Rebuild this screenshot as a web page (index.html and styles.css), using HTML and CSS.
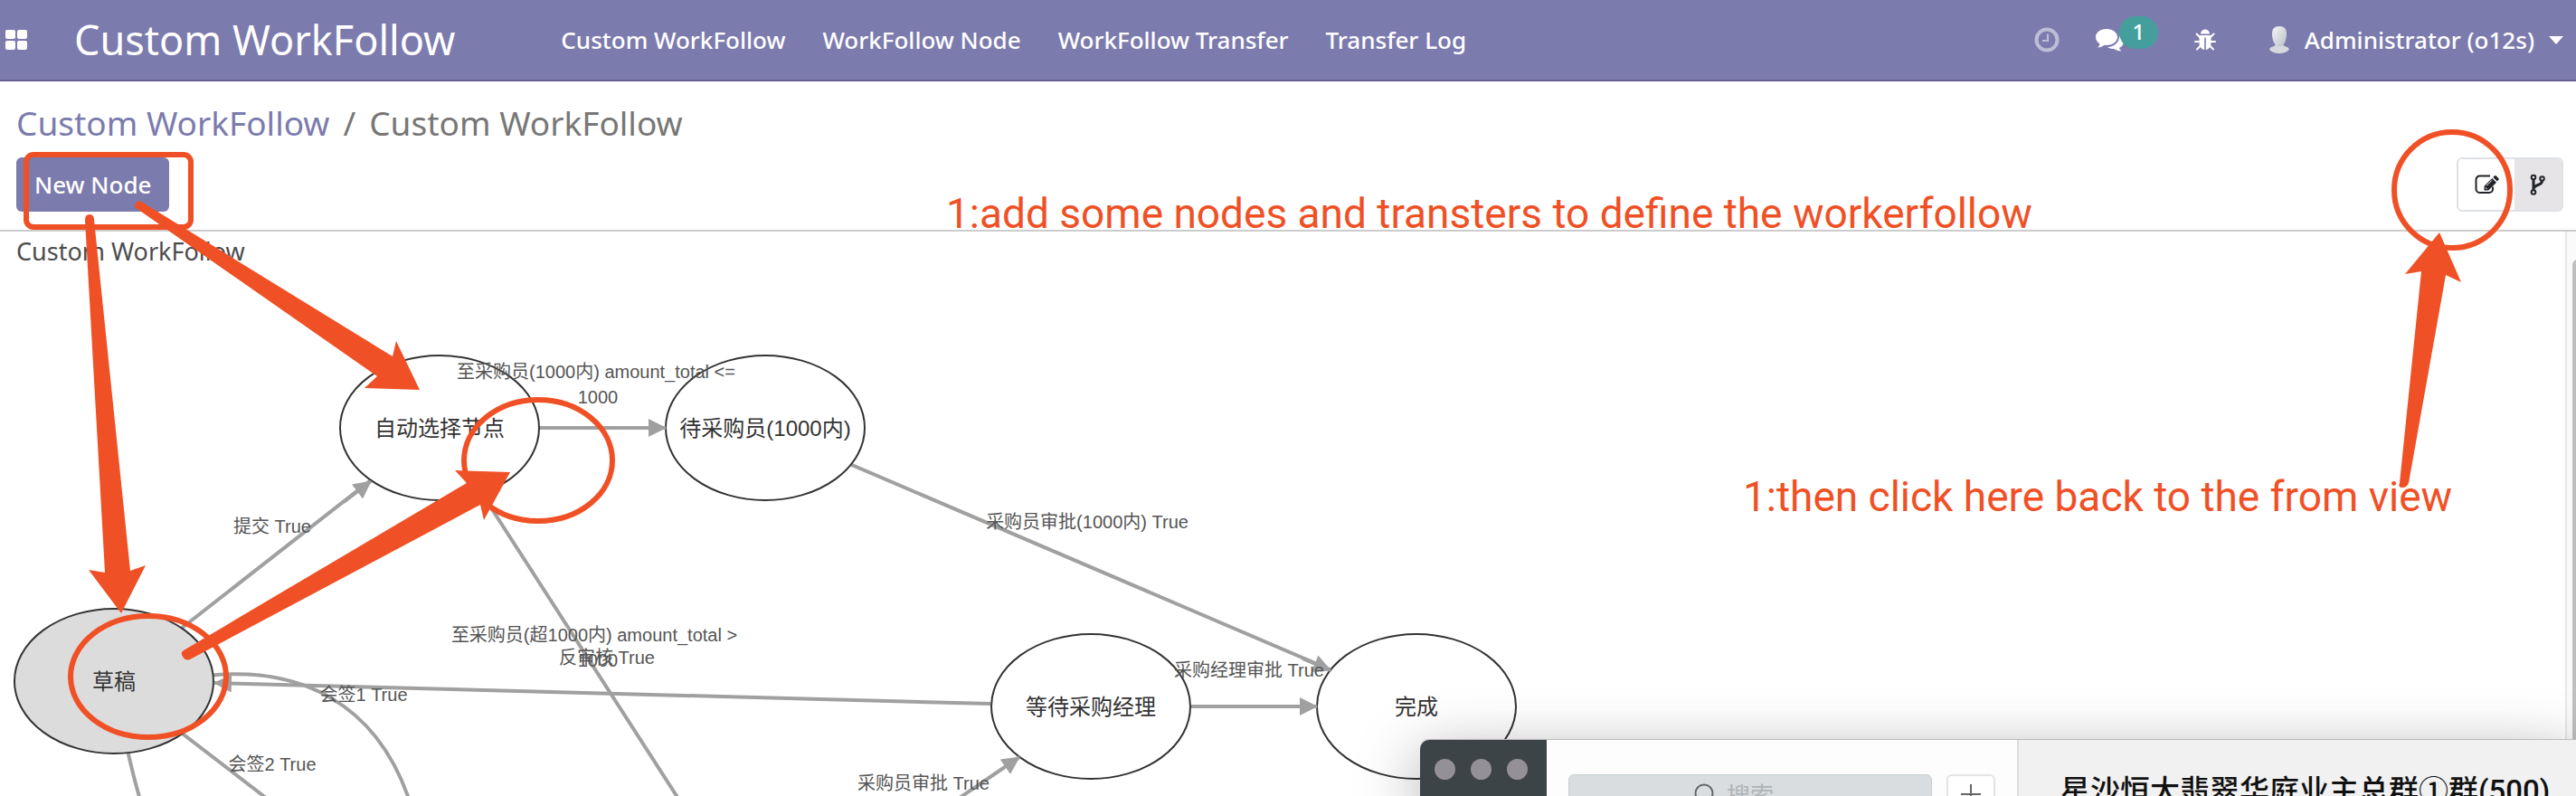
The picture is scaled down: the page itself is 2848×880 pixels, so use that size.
FILE: index.html
```html
<!DOCTYPE html>
<html lang="en">
<head>
<meta charset="utf-8">
<title>Custom WorkFollow</title>
<link rel="stylesheet" href="styles.css">
</head>
<body>
<header class="navbar">
  <button class="icon-button apps" aria-label="Applications">
    <svg width="24" height="22" viewBox="0 0 24 22" fill="currentColor"><rect width="11" height="10" rx="2"/><rect x="13" width="11" height="10" rx="2"/><rect y="12" width="11" height="10" rx="2"/><rect x="13" y="12" width="11" height="10" rx="2"/></svg>
  </button>
  <a class="brand" href="#">Custom WorkFollow</a>
  <nav class="menu">
    <a href="#">Custom WorkFollow</a>
    <a href="#">WorkFollow Node</a>
    <a href="#">WorkFollow Transfer</a>
    <a href="#">Transfer Log</a>
  </nav>
  <div class="systray">
    <button class="icon-button activity" aria-label="Activities">
      <svg width="28" height="28" viewBox="0 0 28 28" fill="none" stroke="currentColor"><circle cx="14" cy="14" r="11.5" stroke-width="4"/><path d="M15 7.500V15H9" stroke-width="2.200"/></svg>
    </button>
    <button class="icon-button messages" aria-label="Messages">
      <svg width="32" height="28" viewBox="0 0 32 28" fill="currentColor"><path d="M13 2C5.800 2 1 6 1 11c0 3.200 1.800 5.800 4.600 7.400C5.200 20 4.200 21.300 3 22.500c3 0 5.600-1.200 7.600-2.800.8.100 1.600.2 2.400.2 7 0 12-3.900 12-8.900S20 2 13 2z"/><path d="M27 9.500c.4 7-5 12.300-13 12.700 2 1.300 4.700 2 7.500 1.800 2 1.500 4.600 2.500 8 2.500-1.300-1-2.200-2.200-2.500-3.500 3.200-1.500 4.800-4 4.600-6.800-.2-2.800-1.800-5.200-4.600-6.700z"/></svg>
      <span class="badge">1</span>
    </button>
    <button class="icon-button bug" aria-label="Debug">
      <svg width="24" height="24" viewBox="0 0 24 24" fill="currentColor"><path d="M7 5.500a5 5 0 0 1 10 0z"/><path d="M5.500 7h13v9c0 4-2.500 6.500-5.700 7V9.500h-1.600V23c-3.200-.5-5.700-3-5.700-7z"/><path d="M6 9 2.500 5.500M18 9l3.500-3.500M6 14H1M18 14h5M7 18.500 3 22.500M17 18.500l4 4" stroke="currentColor" stroke-width="2" stroke-linecap="round"/></svg>
    </button>
    <button class="icon-button user">
      <svg width="24" height="30" viewBox="0 0 24 30"><defs><linearGradient id="skin" x1="0" y1="0" x2="1" y2="1"><stop offset="0" stop-color="#f6f6f6"/><stop offset="1" stop-color="#b9bec4"/></linearGradient></defs><path d="M8 20c-.2 2.500-6 2.200-7 5.500C3.500 29 8 30 12 30s8.500-1 11-4.500c-1-3.300-6.800-3-7-5.500z" fill="#d5d8dc"/><path d="M12 0C6.500 0 4 3 4 8c0 8 3 14.500 8 14.500S20 16 20 8c0-5-2.500-8-8-8z" fill="url(#skin)"/></svg>
      <span>Administrator (o12s)</span>
      <svg class="caret" width="16" height="9" viewBox="0 0 16 9" fill="currentColor"><path d="M0 0h16L8 9z"/></svg>
    </button>
  </div>
</header>

<section class="control-panel">
  <ol class="breadcrumb">
    <li><a href="#">Custom WorkFollow</a></li>
    <li>Custom WorkFollow</li>
  </ol>
  <div class="actions">
    <button class="primary">New Node</button>
    <div class="switcher">
      <button aria-label="Form view">
        <svg width="28" height="24" viewBox="0 0 28 24" fill="none" stroke="#212529"><path d="M18 2.500H6.500a4 4 0 0 0-4 4V17a4 4 0 0 0 4 4H17a4 4 0 0 0 4-4v-2.500" stroke-width="2"/><path d="M11.500 18.500v-4.700L20.300 5l4.700 4.700-8.800 8.800z" fill="#212529" stroke="none"/><path d="m21.300 4 1.400-1.400c.7-.7 1.500-.7 2.200 0l2.300 2.300c.7.7.7 1.500 0 2.200L25.900 8.600z" fill="#212529" stroke="none"/><path d="m14 13.300 6-6M12.800 15.300l1.900 1.900" stroke="#fff" stroke-width="1"/></svg>
      </button>
      <button class="active" aria-label="Diagram view">
        <svg width="18" height="24" viewBox="0 0 18 24" fill="none" stroke="#212529" stroke-width="2"><circle cx="4" cy="4" r="2.300"/><circle cx="4" cy="20.500" r="2.300"/><circle cx="13.500" cy="5.500" r="2.300"/><path d="M4 6.500v11.500M13.500 8c0 5.500-9 3.500-9.500 9" stroke-width="3"/></svg>
      </button>
    </div>
  </div>
</section>

<main class="content">
  <section class="diagram">
    <h1 class="diagram-title">Custom WorkFollow</h1>
    <svg class="canvas" role="img" aria-label="Workflow diagram">
      <defs>
        <marker id="head" markerUnits="userSpaceOnUse" markerWidth="20" markerHeight="20" refX="19" refY="10" orient="auto"><path d="M0 0 20 10 0 20z" fill="#a0a0a0"/></marker>
      </defs>
      <g transform="translate(0 -300)">
        <g class="edges">
          <path d="M126 753 484 473"/>
          <path d="M486 473 752 886"/>
          <path d="M846 473 1566 781"/>
          <path d="M126 753 320 902"/>
          <path d="M138 815 Q145 850 156 888"/>
          <path d="M230 747 C330 736 416 776 453 886"/>
        </g>
        <g class="nodes">
          <ellipse cx="486" cy="473" rx="110" ry="80"/>
          <ellipse cx="846" cy="473" rx="110" ry="80"/>
          <ellipse class="start" cx="126" cy="753" rx="110" ry="80"/>
          <ellipse cx="1206" cy="781" rx="110" ry="80"/>
          <ellipse cx="1566" cy="781" rx="110" ry="80"/>
        </g>
        <g class="edges arrows">
          <path d="M597 473H736"/>
          <path d="M380 555 410 532"/>
          <path d="M1440 728 1471 741"/>
          <path d="M1095 778 237 755"/>
          <path d="M1317 781H1456"/>
          <path d="M1058 884 1127 837"/>
        </g>
        <g class="node-labels">
          <text x="486" y="482">自动选择节点</text>
          <text x="846" y="482">待采购员(1000内)</text>
          <text x="126" y="762">草稿</text>
          <text x="1206" y="790">等待采购经理</text>
          <text x="1566" y="790">完成</text>
        </g>
        <g class="edge-labels">
          <text x="659" y="418">至采购员(1000内) amount_total &lt;=</text>
          <text x="661" y="446">1000</text>
          <text x="301" y="589">提交 True</text>
          <text x="657" y="709">至采购员(超1000内) amount_total &gt;</text>
          <text x="661" y="737">1000</text>
          <text x="671" y="734">反审核 True</text>
          <text x="402" y="775">会签1 True</text>
          <text x="301" y="852">会签2 True</text>
          <text x="1202" y="584">采购员审批(1000内) True</text>
          <text x="1381" y="748">采购经理审批 True</text>
          <text x="1021" y="873">采购员审批 True</text>
        </g>
      </g>
    </svg>
  </section>
  <div class="scrollbar"><div class="thumb"></div></div>
</main>

<svg class="annotations">
  <g class="outlines">
    <rect x="29" y="171" width="182" height="80" rx="8"/>
    <ellipse cx="595" cy="509" rx="82" ry="67"/>
    <ellipse cx="164" cy="748" rx="86" ry="67"/>
    <circle cx="2711" cy="210" r="64"/>
  </g>
  <g class="arrows-red">
    <path d="M94 243Q94 237 99 237T104 243L144 631 161 625 134 678 98 630 116 633z"/>
    <path d="M149 229Q150 219 158 224L434 394 438 377 464 431 403 429 417 416z"/>
    <path d="M203 719 516 534 503 520 564 522 535 575 531 558 210 729Q205 731 202 726T203 719z"/>
    <path d="M2697 257 2721 312 2704 304 2663 534Q2661 539 2656 539T2653 534L2677 300 2659 303z"/>
  </g>
  <text x="1046" y="252">1:add some nodes and transters to define the workerfollow</text>
  <text x="1927" y="565">1:then click here back to the from view</text>
</svg>

<aside class="chat">
  <div class="rail"><i></i><i></i><i></i></div>
  <div class="contacts">
    <label class="search">
      <svg width="24" height="28" viewBox="0 0 24 28" fill="none" stroke="#666" stroke-width="2"><circle cx="11" cy="13" r="9.500"/><path d="m18 20 5 6"/></svg>
      <input type="text" placeholder="搜索" aria-label="搜索">
    </label>
    <button class="add" aria-label="Add"><svg width="22" height="22" viewBox="0 0 22 22" stroke="#666" stroke-width="2"><path d="M11 0v22M0 11h22"/></svg></button>
  </div>
  <h2 class="chat-title">星沙恒大翡翠华庭业主总群①群(500)</h2>
</aside>
</body>
</html>
```
FILE: styles.css
```css
* { box-sizing: border-box; }
body {
  margin: 0;
  height: 100vh;
  display: flex;
  flex-direction: column;
  position: relative;
  overflow: hidden;
  background: #fff;
  color: #4c4c4c;
  font: 27px/44px "Noto Sans", "Noto Sans CJK SC", sans-serif;
}
a { color: inherit; text-decoration: none; }
button { font: inherit; color: inherit; border: 0; background: none; padding: 0; }
svg { display: block; flex: none; }

.navbar {
  display: flex;
  align-items: center;
  height: 90px;
  flex: none;
  padding: 0 14px 0 6px;
  background: #7c7bad;
  border-bottom: 2px solid #655f99;
  color: #fff;
  font-size: 26px;
  font-weight: 500;
}
.brand { margin-left: 52px; font-size: 45px; line-height: 60px; font-weight: 400; }
.menu { display: flex; gap: 41px; margin-left: 117px; }
.systray { display: flex; align-items: center; margin-left: auto; }
.icon-button { display: flex; align-items: center; }
.activity { opacity: .5; }
.messages { margin-left: 39px; position: relative; }
.badge {
  position: absolute;
  left: 27px;
  top: -12px;
  width: 43px;
  height: 36px;
  border-radius: 18px;
  background: #449f9c;
  font-size: 24px;
  line-height: 34px;
  text-align: center;
}
.bug { margin-left: 78px; }
.user { margin-left: 58px; gap: 16px; }

.control-panel {
  flex: none;
  display: flex;
  flex-direction: column;
  gap: 13px;
  padding: 21px 14px 20px 18px;
  border-bottom: 2px solid #ccc;
}
.breadcrumb {
  display: flex;
  margin: 0;
  padding: 0;
  list-style: none;
  font-size: 37px;
  line-height: 50px;
  color: #777;
}
.breadcrumb a { color: #7c7bad; }
.breadcrumb li + li::before { content: "/"; padding: 0 15px; }
.actions { display: flex; justify-content: space-between; }
.primary {
  height: 60px;
  padding: 0 20px;
  border-radius: 6px;
  background: #7c7bad;
  color: #fff;
  font-size: 26px;
  font-weight: 500;
}
.switcher {
  display: flex;
  height: 60px;
  border: 2px solid #dee2e6;
  border-radius: 6px;
  overflow: hidden;
}
.switcher button { display: flex; align-items: center; padding: 0 17px; }
.switcher .active { background: #e6e4e6; }

.content { flex: 1; min-height: 0; display: flex; }
.diagram { flex: 1; min-width: 0; display: flex; flex-direction: column; }
.diagram-title { margin: 0; padding-left: 18px; font-size: 27px; line-height: 44px; font-weight: 400; }
.canvas { width: 100%; flex: 1; min-height: 0; overflow: hidden; }
.edges path { fill: none; stroke: #a0a0a0; stroke-width: 4; }
.arrows path { marker-end: url(#head); }
.nodes ellipse { fill: #fff; stroke: #333; stroke-width: 2; }
.nodes .start { fill: #dcdcdc; }
.node-labels, .edge-labels {
  font-family: "Liberation Sans", "Noto Sans CJK SC", sans-serif;
  text-anchor: middle;
}
.node-labels { font-size: 24px; fill: #333; }
.edge-labels { font-size: 20px; fill: #555; }
.scrollbar {
  width: 12px;
  padding: 31px 0 0 6px;
  border-left: 2px solid #e6e6e6;
  background: #fafafa;
  overflow: hidden;
}
.thumb { width: 12px; height: 100%; border-radius: 6px; background: #bfbfbf; }

.annotations {
  position: absolute;
  inset: 0;
  width: 100%;
  height: 100%;
  pointer-events: none;
  fill: #f05025;
  font-family: Roboto, sans-serif;
  font-size: 46px;
}
.outlines { fill: none; stroke: #f05025; stroke-width: 6; }

.chat {
  position: absolute;
  left: 1570px;
  right: 0;
  top: 818px;
  bottom: 0;
  display: flex;
  border-top-left-radius: 10px;
  background: #f1f1f1;
  box-shadow: 0 -1px 0 #bbb, 0 20px 70px rgba(0, 0, 0, .4);
}
.rail {
  display: flex;
  gap: 17px;
  width: 140px;
  padding: 21px 16px;
  border-top-left-radius: 10px;
  background: #3d4447;
}
.rail i { width: 23px; height: 23px; border-radius: 50%; background: #949097; }
.contacts {
  display: flex;
  gap: 16px;
  width: 522px;
  height: 100%;
  padding: 38px 24px 0;
  overflow: hidden;
  border-right: 2px solid #ddd;
  background: #fdfdfd;
}
.search {
  flex: 1;
  min-width: 0;
  height: 44px;
  display: flex;
  align-items: center;
  gap: 12px;
  padding-left: 138px;
  border: 1px solid #c9d0d1;
  border-radius: 6px;
  background: #d9dddf;
}
.search input {
  width: 100px;
  padding: 0;
  border: 0;
  background: none;
  font: 26px/36px "Noto Sans CJK SC", sans-serif;
}
.search input::placeholder { color: #b0b4b6; opacity: 1; }
.add {
  width: 54px;
  height: 44px;
  display: grid;
  place-items: center;
  border: 2px solid #e3e3e3;
  border-radius: 6px;
  background: #fff;
}
.chat-title {
  flex: 1;
  height: 100%;
  margin: 0;
  padding: 33px 0 0 46px;
  overflow: hidden;
  white-space: nowrap;
  font: 500 33px/48px Roboto, "Noto Sans CJK SC", sans-serif;
  color: #111;
}
```
